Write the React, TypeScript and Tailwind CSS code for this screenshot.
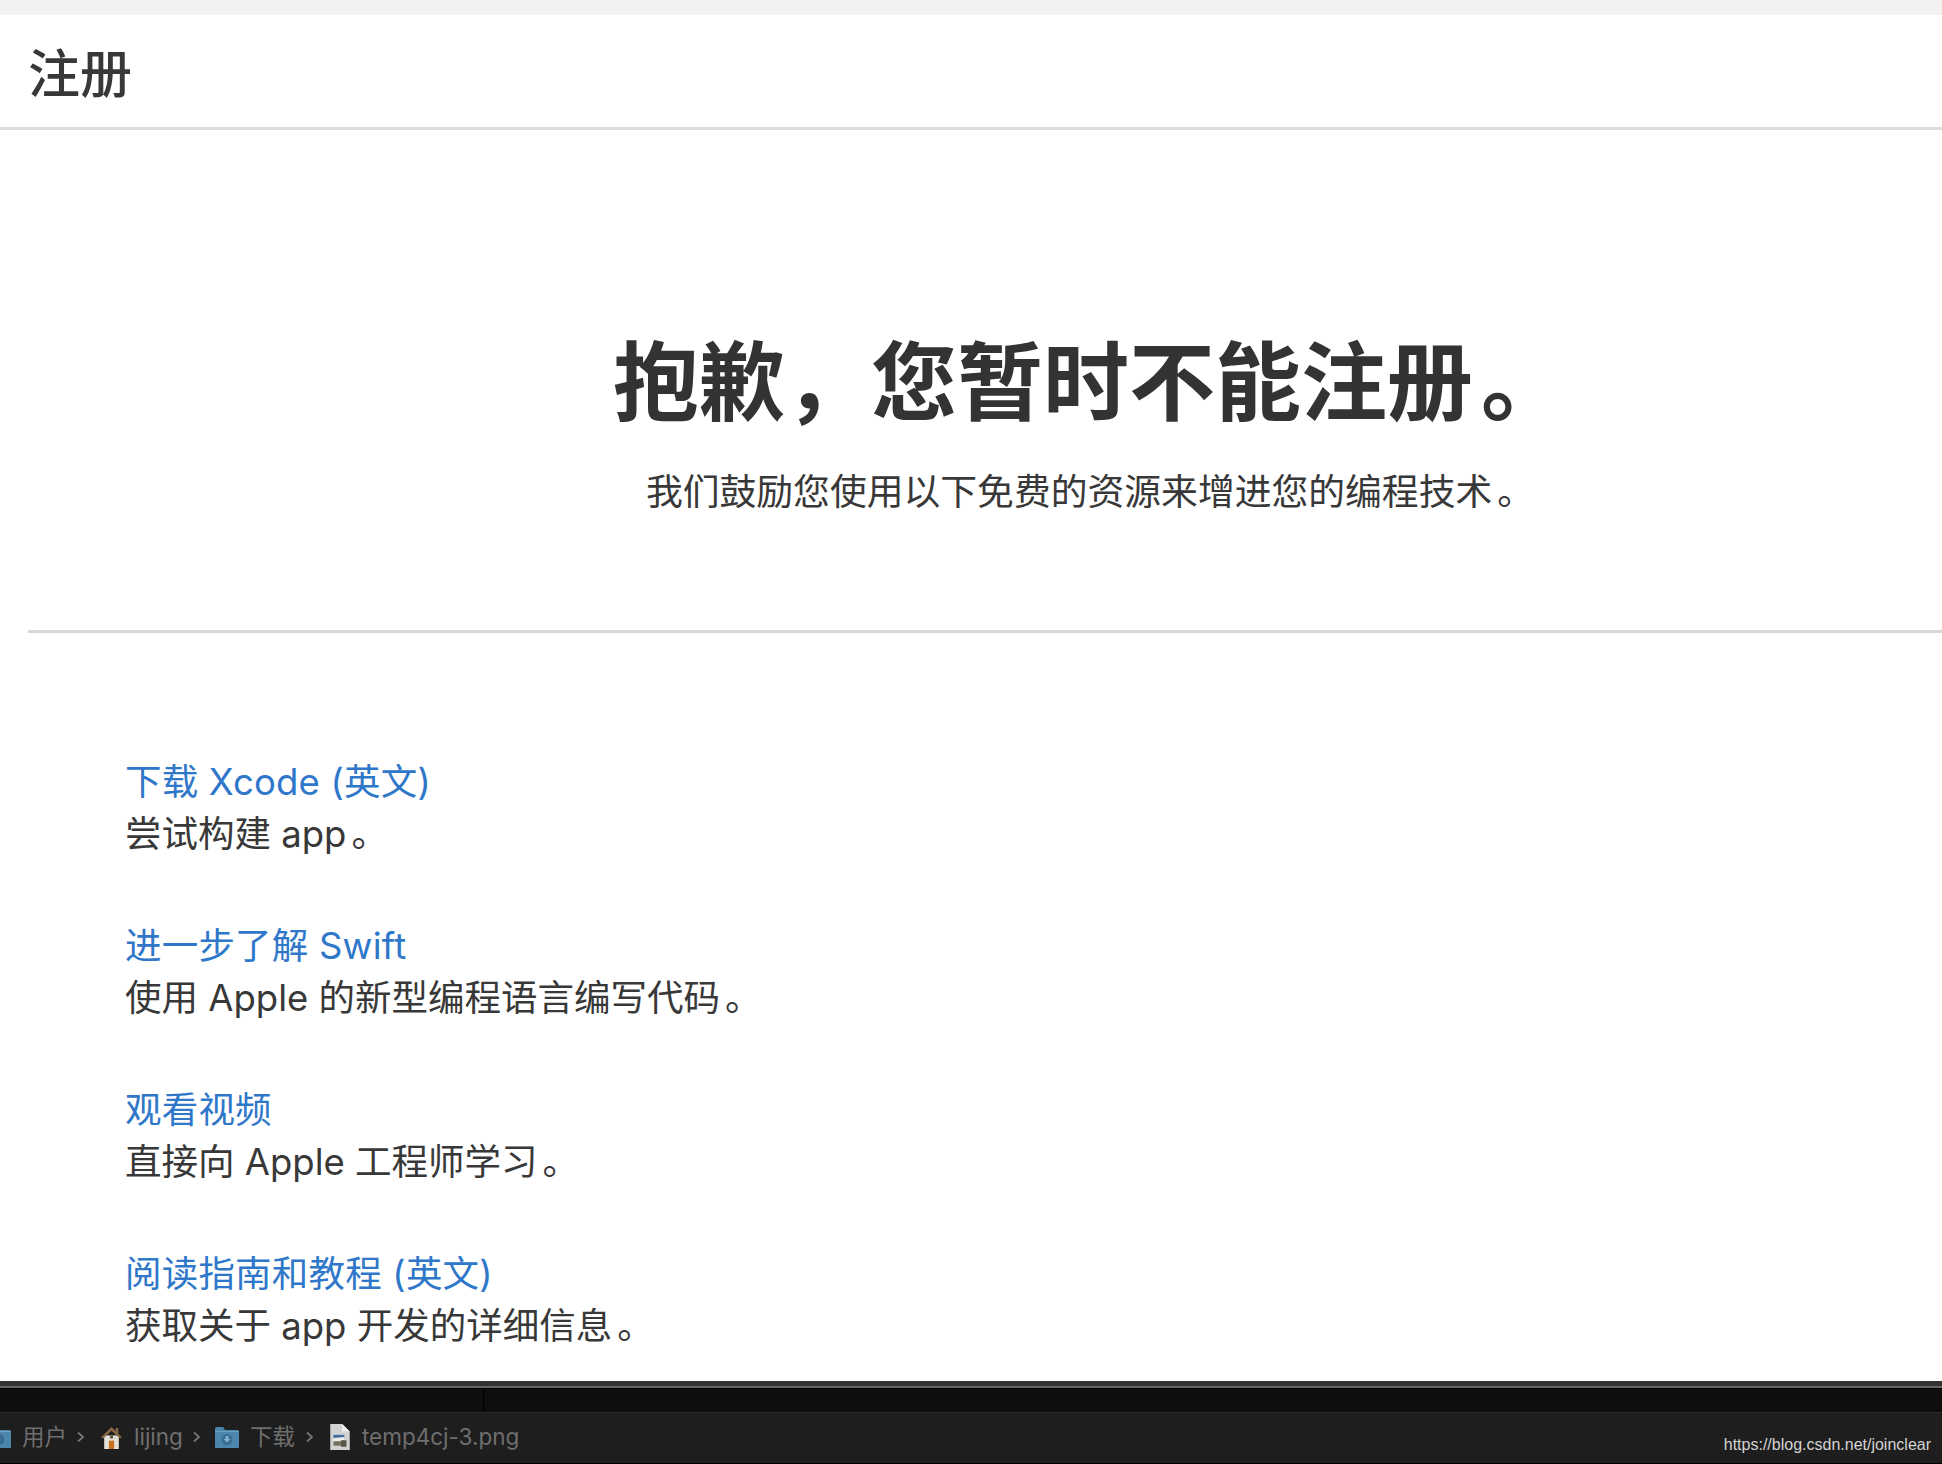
import React from "react";

const font = "font-['Inter','Noto_Sans_CJK_SC',sans-serif]";

const resources = [
  { title: "下载 Xcode (英文)", text: "尝试构建 app" },
  { title: "进一步了解 Swift", text: "使用 Apple 的新型编程语言编写代码" },
  { title: "观看视频", text: "直接向 Apple 工程师学习" },
  { title: "阅读指南和教程 (英文)", text: "获取关于 app 开发的详细信息" },
];

const Chevron: React.FC<{ className?: string }> = ({ className }) => (
  <svg width="9" height="14" viewBox="0 0 9 14" className={`shrink-0 ${className ?? ""}`} fill="none">
    <path d="M2 2.5 L7 7 L2 11.5" stroke="#777" strokeWidth="1.7" />
  </svg>
);

const FolderIcon: React.FC<{ arrow?: boolean; className?: string }> = ({ arrow, className }) => (
  <svg width="26" height="23" viewBox="0 0 24 23" className={`shrink-0 ${className ?? ""}`}>
    <path d="M0 3 a2 2 0 0 1 2-2 h6 l2 3 h12 a2 2 0 0 1 2 2 v15 a1 1 0 0 1-1 1 H1 a1 1 0 0 1-1-1 Z" fill="#4d86ad" />
    <rect x="0" y="5" width="24" height="1" fill="#6aa0c4" />
    <circle cx="12" cy="13.5" r="5.5" fill="#3a6c8f" />
    {arrow && <path d="M10.5 10 h3 v3 h2 l-3.500 3.500 l-3.500-3.500 h2 Z" fill="#7fb0d0" />}
  </svg>
);

const HomeIcon: React.FC<{ className?: string }> = ({ className }) => (
  <svg width="21" height="23" viewBox="0 0 20 22" className={`shrink-0 ${className ?? ""}`}>
    <path d="M3 9 h14 v13 H3 Z" fill="#e6e1d8" />
    <path d="M0 11 L10 1 L20 11 L18 12 L10 4.500 L2 12 Z" fill="#8a6a45" />
    <rect x="14" y="2" width="2.500" height="5" fill="#8a6a45" />
    <rect x="7.500" y="14" width="5" height="8" fill="#c9711f" />
    <rect x="8.500" y="9" width="3" height="3" fill="#6b5a44" />
  </svg>
);

const DocIcon: React.FC<{ className?: string }> = ({ className }) => (
  <svg width="20" height="26" viewBox="0 0 18 24" className={`shrink-0 ${className ?? ""}`}>
    <path d="M0 0 H11 L18 7 V24 H0 Z" fill="#d2d2d2" />
    <path d="M11 0 L18 7 H11 Z" fill="#efefef" />
    <rect x="3" y="10" width="10" height="3" fill="#3f6ea3" />
    <path d="M3 13 L13 12 V15 L3 16 Z" fill="#eeeeee" />
    <rect x="3" y="16" width="8" height="4" fill="#77705f" />
    <rect x="10" y="15" width="5" height="6" fill="#5a554a" />
  </svg>
);

const App: React.FC = () => {
  return (
    <div className={`w-[1942px] h-[1464px] overflow-hidden bg-white flex flex-col ${font}`}>
      <div className="h-[15px] bg-[#f2f2f2]" />
      <header className="h-[115px] flex items-center pl-[28px] pt-[8px] border-b-[3px] border-[#dcdcdc]">
        <h1 className="text-[52px] leading-none text-[#383838] font-medium">注册</h1>
      </header>

      <main className="flex-1 pl-[28px] flex flex-col">
        <section className="h-[500px] flex flex-col items-center pl-[210px]">
          <h2 className="mt-[193px] text-[86px] leading-[120px] font-bold text-[#333333] whitespace-nowrap">
            {"抱歉\uFF0C您暂时不能注册"}
            <span className="pl-[8px]">。</span>
          </h2>
          <p className="mt-[24px] text-[36.800px] leading-[50px] text-[#383838] whitespace-nowrap">
            我们鼓励您使用以下免费的资源来增进您的编程技术<span className="pl-[5px]">。</span>
          </p>
        </section>
        <div className="h-[3px] bg-[#d8d8d8]" />

        <ul className="pl-[97px] pt-[122px] flex flex-col gap-[60px]">
          {resources.map((r) => (
            <li key={r.title} className="text-[36.500px] whitespace-nowrap">
              <a className="block leading-[54px] tracking-[0.2px] text-[#2f77c9]">{r.title}</a>
              <p className="leading-[50px] text-[#383838]">
                {r.text}
                <span className="pl-[5px]">。</span>
              </p>
            </li>
          ))}
        </ul>
      </main>

      <footer className="h-[83px] shrink-0 flex flex-col bg-[#1e1e1e]">
        <div className="h-[5px] bg-[#333333]" />
        <div className="h-[2px] bg-[#666666]" />
        <div className="h-[25px] bg-[#0e0e0e] border-t border-black border-b border-b-[#2b2b2b] pl-[483px]">
          <div className="w-px h-full bg-black" />
        </div>
        <div className="flex-1 relative flex items-center pb-[2px] text-[22.500px] text-[#6f6f6f] border-b border-black">
          <FolderIcon className="-ml-[14px]" />
          <span className="ml-[10px]">用户</span>
          <Chevron className="ml-[9px]" />
          <HomeIcon className="ml-[16px]" />
          <span className="ml-[12px]">lijing</span>
          <Chevron className="ml-[9px]" />
          <FolderIcon arrow className="ml-[13px]" />
          <span className="ml-[10px]">下载</span>
          <Chevron className="ml-[10px]" />
          <DocIcon className="ml-[16px]" />
          <span className="ml-[12px]">temp4cj-3.png</span>
          <span className="absolute right-[11px] top-[21px] font-['Liberation_Sans',sans-serif] text-[16px] leading-[22px] text-[#d4d4d4]">
            https://blog.csdn.net/joinclear
          </span>
        </div>
      </footer>
    </div>
  );
};

export default App;
